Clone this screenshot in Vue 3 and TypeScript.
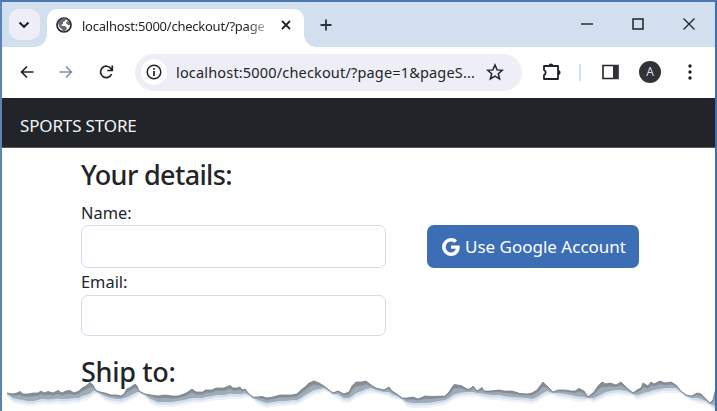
<script setup lang="ts">
import { ref } from 'vue'

const tabTitle = 'localhost:5000/checkout/?page'
const address = 'localhost:5000/checkout/?page=1&pageS...'
const name = ref('')
const email = ref('')

// Torn paper edge: x, top of the tear, thickness of its shadow
type EdgePoint = [number, number, number]
const edge: EdgePoint[] = [
  [7, 393, 1], [13, 394, 4], [17, 393, 6], [20, 391.5, 8], [23, 394, 6], [28, 394, 7], [33, 393, 8],
  [38, 393, 7], [41, 391, 8], [44, 393, 6], [48, 391.5, 8], [53, 393, 6], [58, 390.5, 8], [62, 393, 6],
  [66, 391, 8], [70, 390.5, 8], [74, 393, 5], [79, 391, 7], [82, 388, 8], [86, 386, 9], [90, 382.5, 11],
  [93, 385, 6], [95, 389, 2], [98, 391.5, 1], [105, 393, 3], [111, 395, 3], [117, 395, 4], [121, 396, 3], [124, 394, 4],
  [127, 389, 8], [131, 387, 8], [135, 384, 9], [137, 386, 6], [139, 391, 1], [145, 394, 1], [151, 395, 4], [158, 396, 6],
  [165, 395, 7], [172, 396, 6], [178, 396, 5], [184, 394, 6], [188, 392, 7], [192, 389, 9], [196, 392, 6],
  [203, 392, 6], [205, 390, 7], [212, 390, 6], [216, 388, 7], [224, 388, 7], [230, 385.5, 8], [233, 388, 6],
  [237, 388, 6], [240, 387, 7], [242, 390, 4], [245, 389, 4], [249, 394, 1], [253, 397, 1], [258, 397, 3], [262, 396.5, 5], [267, 398, 5],
  [273, 397, 5], [280, 395, 6], [286, 395, 6], [292, 395, 5], [297, 394, 6], [301, 390, 8], [305, 387, 8], [309, 383, 10], [314, 381, 9],
  [319, 383, 6], [324, 386, 2], [329, 390, 1], [333, 393, 1], [338, 391, 3], [344, 394, 4], [349, 392, 6], [352, 386, 10],
  [356, 382, 11], [362, 382, 9], [366, 381, 8], [371, 385, 3], [376, 388, 2], [384, 390, 2], [389, 387, 5], [392, 391, 3],
  [397, 394, 2], [402, 398, 1], [407, 398, 4], [413, 397, 6], [418, 399, 4], [425, 396, 7], [431, 396.5, 6], [445, 396, 4],
  [449, 392, 6], [454, 384.5, 10], [461, 385.5, 7], [467, 389, 3], [470, 389, 3], [473, 386, 6], [477, 391, 2],
  [482, 387.5, 6], [484, 391, 3], [491, 391, 4], [499, 390, 5], [504, 391, 5], [512, 391, 6], [520, 393.5, 4],
  [527, 394, 4], [532, 393, 6], [537, 390, 7], [543, 382, 11], [547, 386, 5], [553, 392, 1], [558, 390, 3], [565, 390, 4],
  [571, 391, 4], [575, 391, 5], [579, 388.5, 8], [584, 391, 6], [588, 397, 1], [594, 392, 6], [598, 386, 10],
  [602, 382, 12], [606, 384, 8], [610, 383, 8], [616, 385, 5], [621, 382, 8], [627, 388, 3], [633, 393, 1],
  [637, 390, 5], [641, 388, 6], [643, 383, 10], [648, 386, 6], [651, 382, 9], [654, 384, 6], [660, 381, 8],
  [665, 383, 5], [671, 382, 6], [676, 385, 3], [681, 391, 1], [686, 395, 1], [692, 396, 2], [697, 393, 5],
  [701, 394, 5], [706, 399, 2], [710, 403, 1], [713, 400, 5], [715, 392, 14], [717, 385, 22],
]
const top = edge.map(([x, y]) => `${x},${y}`)
const below = (extra: number) =>
  [...edge].reverse().map(([x, y, t]) => `${x},${y + t + extra * Math.min(1, t / 3)}`)
const band = (extra: number) => [...top, ...below(extra)].join(' ')
const ridge = [
  ...top,
  ...[...edge].reverse().map(([x, y, t]) => `${x},${y + t * 0.4}`),
].join(' ')
</script>

<template>
  <div class="window">
    <header class="tabstrip">
      <button class="search-tabs" aria-label="Search tabs">
        <svg width="12" height="8" viewBox="0 0 12 8"><path d="M1.5 1.5l4.5 4.3 4.5-4.3" fill="none" stroke="#202327" stroke-width="2" /></svg>
      </button>
      <div class="tab">
        <svg class="globe" width="16" height="16" viewBox="0 0 16 16">
          <circle cx="8" cy="8" r="7" fill="#fff" stroke="#25282c" stroke-width="1.7" />
          <path d="M2 6l2-3 4-2 2 1-1 2-2 1v2l-2 1 1 1 3 0 2 2-1 2-3 2-1-3-2-1-1-2zM11 4l3 1v3l-2 0-2-2z" fill="#64676b" />
        </svg>
        <span class="tab-title">{{ tabTitle }}</span>
        <svg class="tab-close" width="10" height="10" viewBox="0 0 10 10"><path d="M1 1l8 8M9 1L1 9" stroke="#202327" stroke-width="1.8" /></svg>
      </div>
      <svg class="plus" width="12" height="12" viewBox="0 0 12 12"><path d="M6 .5v11M.5 6h11" stroke="#303336" stroke-width="1.8" /></svg>
      <div class="controls">
        <svg width="12" height="12" viewBox="0 0 12 12"><path d="M0 6h12" stroke="#202327" stroke-width="1.4" /></svg>
        <svg width="12" height="12" viewBox="0 0 12 12"><path d="M1 1h10v10H1z" fill="none" stroke="#202327" stroke-width="1.5" /></svg>
        <svg width="12" height="12" viewBox="0 0 12 12"><path d="M.5 .5l11 11M11.5 .5l-11 11" stroke="#202327" stroke-width="1.3" /></svg>
      </div>
    </header>
    <div class="toolbar">
      <svg class="back" width="14" height="14" viewBox="0 0 14 14"><path d="M13.5 7H1.5M7 1.5L1.5 7 7 12.5" fill="none" stroke="#202327" stroke-width="1.7" /></svg>
      <svg class="forward" width="14" height="14" viewBox="0 0 14 14"><path d="M.5 7h12M7 1.5L12.5 7 7 12.5" fill="none" stroke="#8090a2" stroke-width="1.6" /></svg>
      <svg class="reload" width="15" height="14" viewBox="0 0 15 14"><path d="M12.6 9A5.7 5.7 0 1 1 12 3.7L13 5M13.3 .5v5H8.3" fill="none" stroke="#202327" stroke-width="1.7" /></svg>
      <div class="address">
        <span class="info">
          <svg width="16" height="16" viewBox="0 0 16 16"><circle cx="8" cy="8" r="6.8" fill="none" stroke="#202327" stroke-width="1.5" /><path d="M8 7v5M8 4v1.7" stroke="#202327" stroke-width="1.7" /></svg>
        </span>
        <span class="url">{{ address }}</span>
        <svg class="star" width="18" height="18" viewBox="0 0 18 18"><path d="M9 2l2.1 4.9 5.2 .4-4 3.5 1.3 5.2L9 13.2 4.4 16l1.3-5.2-4-3.5 5.2-.4z" fill="none" stroke="#202327" stroke-width="1.5" /></svg>
      </div>
      <svg class="puzzle" width="20" height="18" viewBox="0 0 20 18">
        <path d="M2 3h14v13H2v-4a2.7 2.7 0 0 0 0-5z" fill="none" stroke="#202327" stroke-width="1.8" stroke-linejoin="round" />
        <path d="M6.5 3a2.5 2.5 0 0 1 5 0zM16 7a2.5 2.5 0 0 1 0 5z" fill="#202327" />
      </svg>
      <span class="separator"></span>
      <svg class="panel" width="17" height="16" viewBox="0 0 17 16"><path d="M1 1.5h15v13H1z" fill="#fff" stroke="#202327" stroke-width="1.6" /><path d="M11 1h5v14h-5z" fill="#303236" /></svg>
      <span class="avatar">A</span>
      <svg class="dots" width="4" height="16" viewBox="0 0 4 16"><circle cx="2" cy="2" r="1.7" /><circle cx="2" cy="8" r="1.7" /><circle cx="2" cy="14" r="1.7" /></svg>
    </div>
    <nav class="navbar"><span>SPORTS STORE</span></nav>
    <main class="content">
      <h4 class="first"><span>Your details:</span></h4>
      <div class="row">
        <form class="fields">
          <label class="name-label" for="name">Name:</label>
          <input id="name" v-model="name" />
          <label for="email">Email:</label>
          <input id="email" v-model="email" class="email" />
        </form>
        <button class="google">
          <svg width="18" height="18" viewBox="0 0 16 16"><path fill="#fff" d="M15.545 6.558a9.420 9.420 0 0 1 .139 1.626c0 2.434-.870 4.492-2.384 5.885h.002C11.978 15.292 10.158 16 8 16A8 8 0 1 1 8 0a7.689 7.689 0 0 1 5.352 2.082l-2.284 2.284A4.347 4.347 0 0 0 8 3.166c-2.087 0-3.860 1.408-4.492 3.304a4.792 4.792 0 0 0 0 3.063h.003c.635 1.893 2.405 3.301 4.492 3.301 1.078 0 2.004-.276 2.722-.764h-.003a3.702 3.702 0 0 0 1.599-2.431H8v-3.080z" /></svg>
          <span>Use Google Account</span>
        </button>
      </div>
      <h4 class="second"><span>Ship to:</span></h4>
    </main>
    <svg class="tear" width="717" height="411" viewBox="0 0 717 411">
      <path class="paper" d="M0 391H7V411H0z" />
      <polygon :points="band(5)" fill="#eef1f8" />
      <polygon :points="band(2.5)" fill="#d2dfed" />
      <polygon :points="band(0)" fill="#9fabb7" />
      <polygon :points="ridge" fill="#888d93" />
      <polyline :points="top.join(' ')" fill="none" stroke="#7d858e" stroke-width=".8" />
    </svg>
  </div>
</template>

<style>
body {
  margin: 0;
  background: #fff;
  overflow: hidden;
}
</style>

<style scoped>
* {
  box-sizing: border-box;
}
.window {
  position: relative;
  width: 717px;
  height: 411px;
  overflow: hidden;
  background: #fff;
  border-top: 2px solid #4b77ad;
  border-left: 2px solid #5b83b8;
  border-right: 2px solid #3c6eb4;
  font-family: "Noto Sans", "Open Sans", sans-serif;
  color: #212529;
}
svg {
  display: block;
  flex: none;
}
span {
  white-space: nowrap;
}
.tabstrip {
  height: 45px;
  display: flex;
  background: #d2dfef;
}
.search-tabs {
  width: 31px;
  height: 31px;
  margin: 7px 0 0 7px;
  padding: 0 1px 0 0;
  border: 0;
  border-radius: 10px;
  background: #eeeff6;
  display: flex;
  align-items: center;
  justify-content: center;
}
.tab {
  position: relative;
  width: 257px;
  height: 38px;
  margin: 7px 0 0 7px;
  padding: 0 0 6px 9px;
  border-radius: 10px 10px 0 0;
  background: #fff;
  display: flex;
  align-items: center;
}
.tab::before,
.tab::after {
  content: "";
  position: absolute;
  bottom: 0;
  width: 12px;
  height: 12px;
}
.tab::before {
  left: -12px;
  background: radial-gradient(circle at 0 0, transparent 11.5px, #fff 12px);
}
.tab::after {
  right: -12px;
  background: radial-gradient(circle at 100% 0, transparent 11.5px, #fff 12px);
}
.tab-title {
  width: 185px;
  margin: 1px 0 0 10px;
  overflow: hidden;
  font-size: 13px;
  line-height: 20px;
  letter-spacing: -0.24px;
  mask-image: linear-gradient(90deg, #000 165px, transparent 192px);
}
.tab-close {
  margin-left: 14px;
}
.plus {
  margin: 17px 0 0 16px;
}
.controls {
  display: flex;
  gap: 39px;
  margin: 16px 20px 0 auto;
}
.toolbar {
  height: 51px;
  display: flex;
  align-items: center;
  padding: 0 0 1px 18px;
}
.forward {
  margin-left: 25px;
}
.reload {
  margin-left: 26px;
}
.address {
  width: 387px;
  height: 37px;
  margin-left: 21px;
  padding-left: 6px;
  border-radius: 19px;
  background: #eeeff6;
  display: flex;
  align-items: center;
}
.info {
  width: 26px;
  height: 26px;
  border-radius: 50%;
  background: #fff;
  display: flex;
  align-items: center;
  justify-content: center;
}
.url {
  width: 302px;
  margin-left: 9px;
  font-size: 14.5px;
  letter-spacing: 0.17px;
}
.star {
  margin-left: 8px;
}
.puzzle {
  margin-left: 20px;
}
.separator {
  width: 2px;
  height: 17px;
  margin-left: 17px;
  background: #d2dfef;
}
.panel {
  margin-left: 21px;
}
.avatar {
  width: 22px;
  height: 22px;
  margin-left: 20px;
  border-radius: 50%;
  background: #303236;
  color: #d9dee5;
  font-size: 12px;
  line-height: 22px;
  text-align: center;
}
.dots {
  margin-left: 27px;
  fill: #202327;
}
.navbar {
  height: 50px;
  padding: 4px 0 0 18px;
  background: #212529;
  border-bottom: 1px solid #5c5559;
  color: #f3f4f5;
  font-size: 17px;
  line-height: 48px;
  letter-spacing: -0.15px;
}
.content {
  padding-left: 79px;
}
h4 {
  margin: 0;
  font-size: 27px;
  line-height: 34px;
  font-weight: 500;
}
.first {
  padding-top: 10px;
  letter-spacing: -0.65px;
}
.second {
  padding-top: 19px;
  letter-spacing: -0.3px;
}
.row {
  display: flex;
  gap: 41px;
}
.fields {
  width: 305px;
  display: flex;
  flex-direction: column;
}
label {
  height: 27px;
  padding-top: 2px;
  font-size: 16.4px;
  line-height: 24px;
}
.name-label {
  height: 33px;
  padding-top: 9px;
}
input {
  width: 305px;
  height: 43px;
  border: 1px solid #d3dbeb;
  border-radius: 7px;
  background: #fff;
  outline: none;
}
.email {
  height: 41px;
}
.google {
  width: 212px;
  height: 43px;
  margin-top: 33px;
  padding: 0 0 0 15px;
  border: 0;
  border-radius: 7px;
  background: #3c6eb6;
  color: #fff;
  font: 17px "Noto Sans", "Open Sans", sans-serif;
  display: flex;
  align-items: center;
  gap: 5px;
}
.tear {
  position: absolute;
  left: -2px;
  top: -2px;
}
.paper {
  fill: #fff;
}
</style>
